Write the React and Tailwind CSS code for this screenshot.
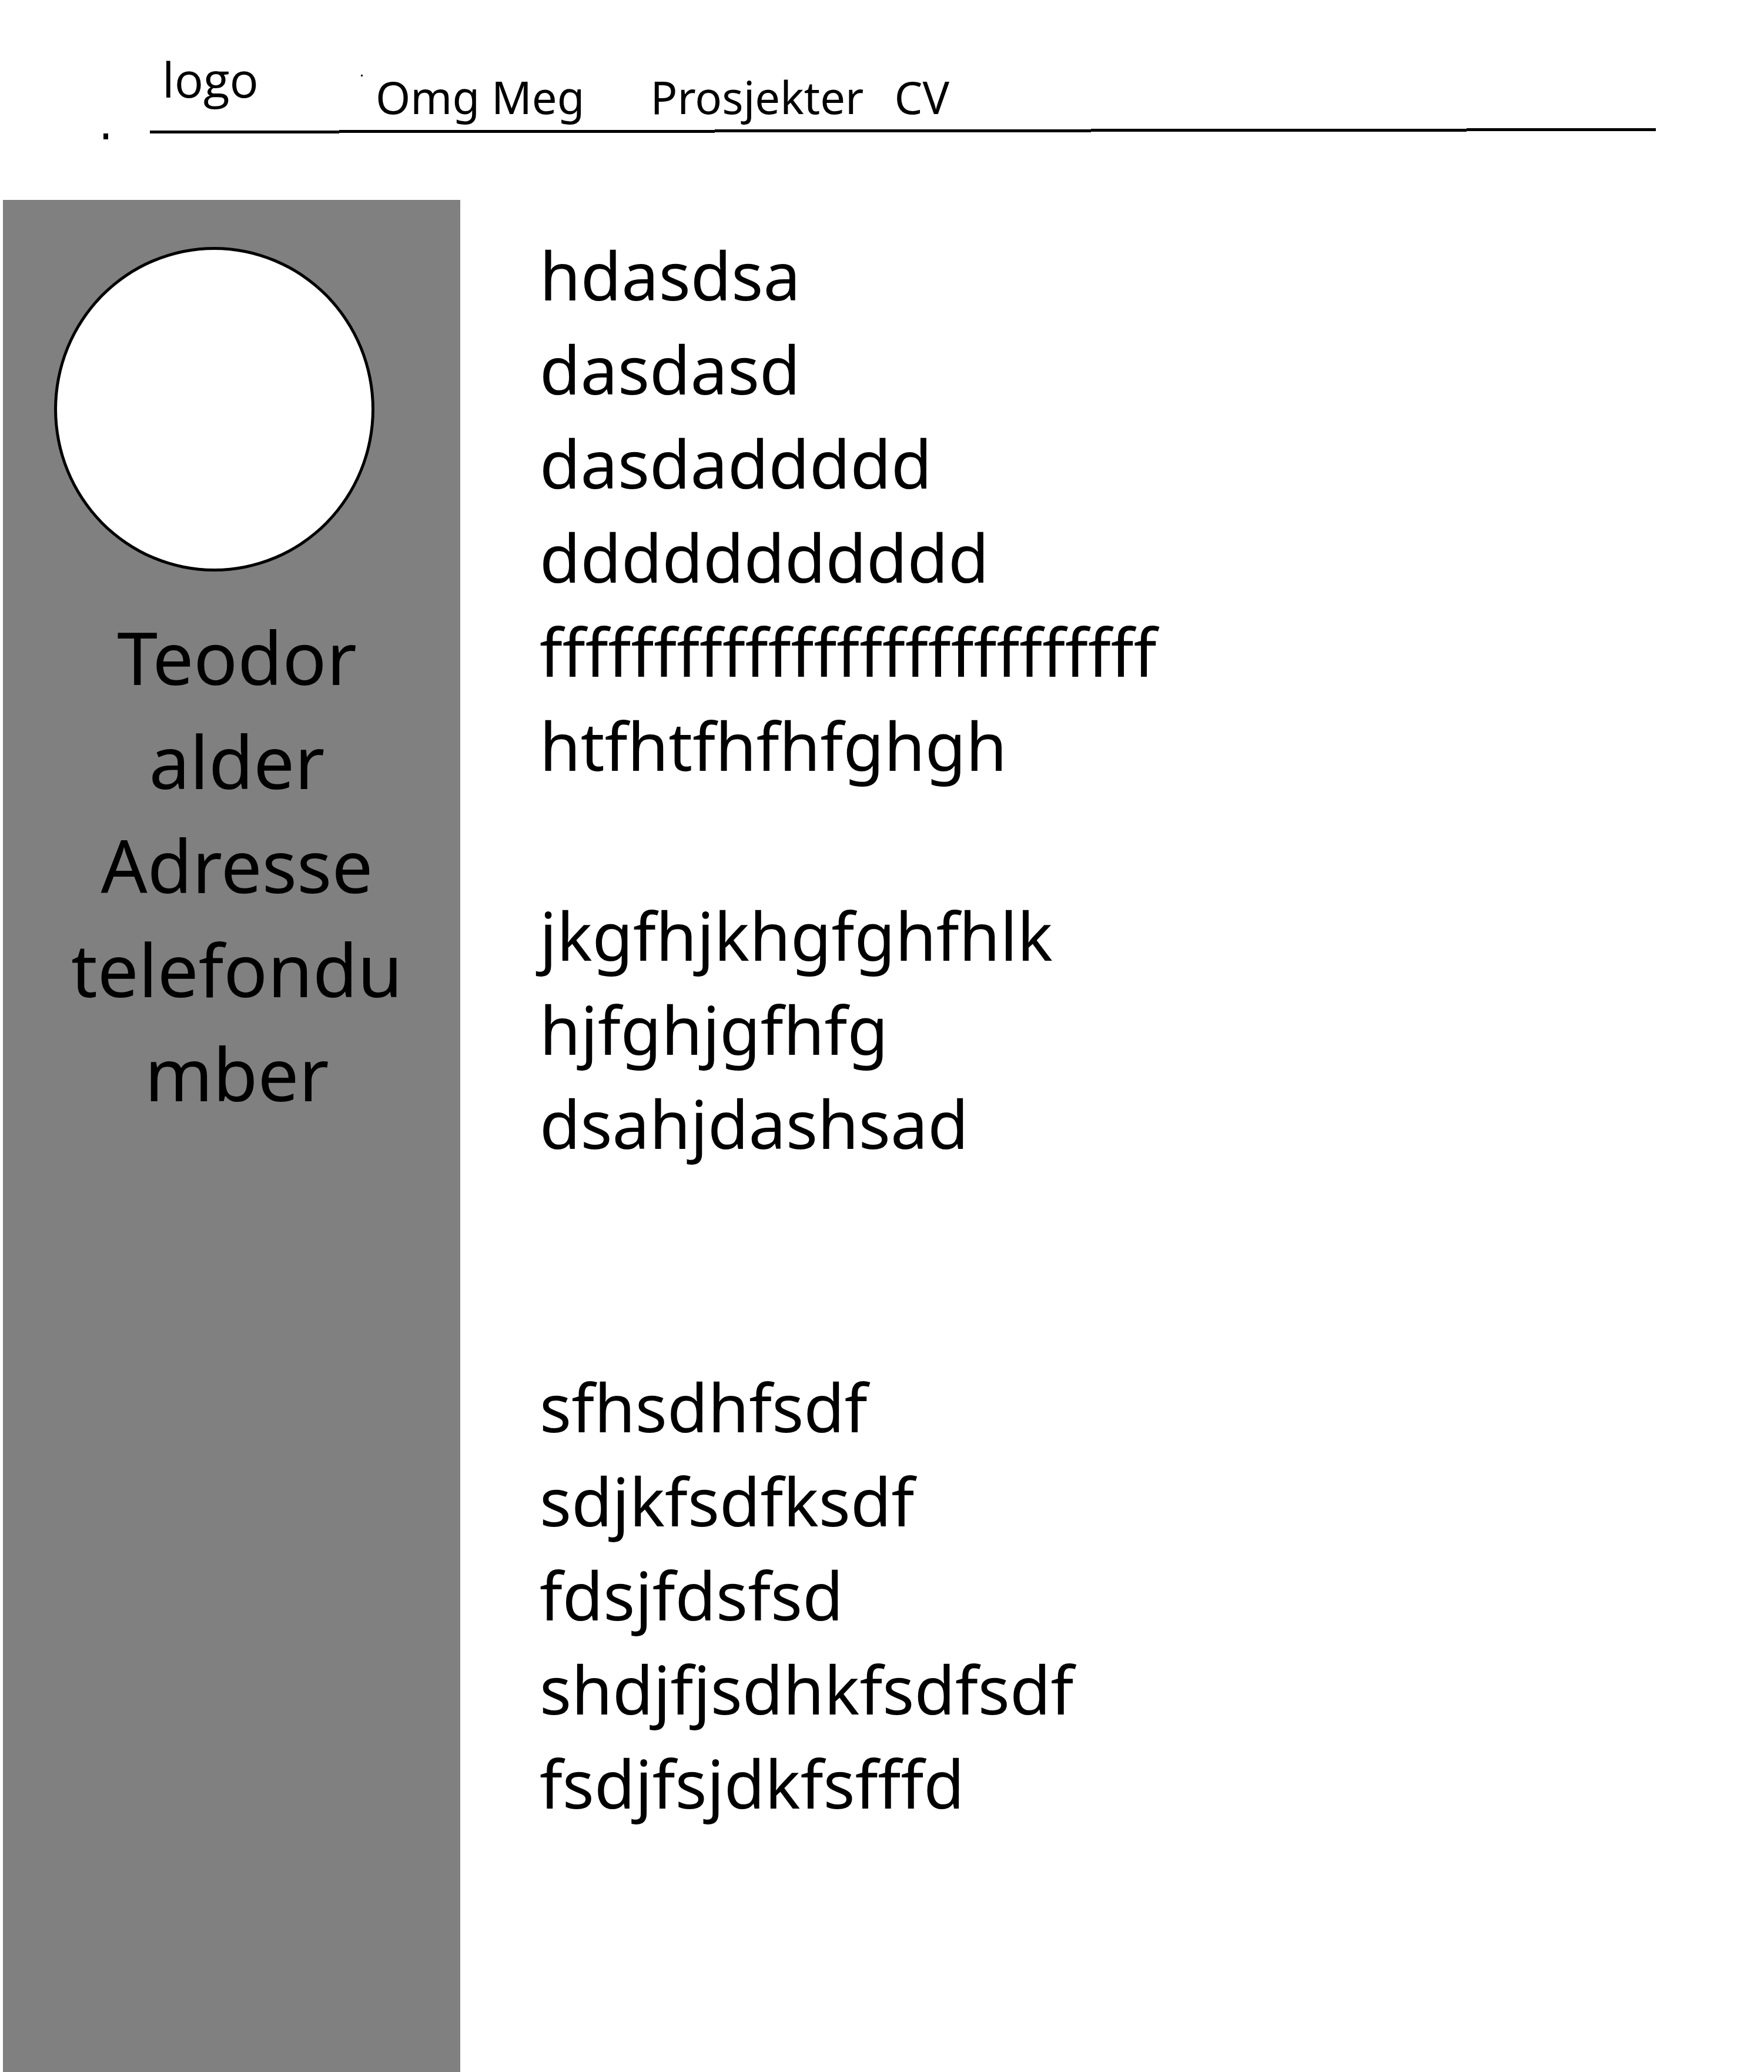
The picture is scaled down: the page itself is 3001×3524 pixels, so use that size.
const paragraphs = [
  ["hdasdsa", "dasdasd", "dasdaddddd", "ddddddddddd", "fffffffffffffffffffffffffff", "htfhtfhfhfghgh"],
  ["jkgfhjkhgfghfhlk", "hjfghjgfhfg", "dsahjdashsad"],
  ["sfhsdhfsdf", "sdjkfsdfksdf", "fdsjfdsfsd", "shdjfjsdhkfsdfsdf", "fsdjfsjdkfsfffd"],
];

const profile = ["Teodor", "alder", "Adresse", "telefondumber"];

function Rule() {
  return (
    <svg
      className="h-[9px] min-w-0 flex-1"
      viewBox="0 0 2562 9"
      preserveAspectRatio="none"
      shapeRendering="crispEdges"
      aria-hidden="true"
    >
      <path d="M0 4H322V3H961V2H1601V1H2240V0H2562V5H2240V6H1601V7H961V8H322V9H0Z" />
    </svg>
  );
}

function Header() {
  return (
    <header className="flex h-[340px] shrink-0 flex-col">
      <div className="flex h-[218px] items-start pl-[276px] pt-20">
        <a
          href="#"
          className="block w-[172px] font-['Open_Sans',sans-serif] text-[82px] leading-[108px] font-medium"
        >
          logo
        </a>
        <span className="ml-[166px] mt-[47px] size-[3px] bg-black" />
        <nav className="ml-[22px] mt-[31px] flex text-[76px] leading-[108px] whitespace-nowrap">
          <a href="#om">Omg Meg</a>
          <a href="#prosjekter" className="ml-28">Prosjekter</a>
          <a href="#cv" className="ml-[52px]">CV</a>
        </nav>
      </div>
      <div className="flex h-[19px] items-start pl-[176px] pr-[184px]">
        <span className="h-[10px] w-2 self-end bg-black" />
        <span className="w-[71px]" />
        <Rule />
      </div>
    </header>
  );
}

function Sidebar() {
  return (
    <aside className="ml-[5px] w-[778px] shrink-0 bg-[#808080] pt-20">
      <div className="ml-[87px] h-[552px] w-[545px] rounded-[50%] border-[5px] border-black bg-white" />
      <div className="ml-[98px] mt-14 w-[600px] text-center text-[124px] leading-[177px] break-all">
        {profile.map((line) => (
          <p key={line}>{line}</p>
        ))}
      </div>
    </aside>
  );
}

export default function App() {
  return (
    <div className="flex min-h-screen flex-col bg-white font-['Noto_Sans',sans-serif] text-black [font-variant-ligatures:none]">
      <Header />
      <div className="flex flex-1">
        <Sidebar />
        <main className="min-w-0 flex-1 pl-[135px] pt-[47px] text-[113px] leading-[160px]">
          {paragraphs.map((lines, i) => (
            <section key={i} className="mb-[163px] nth-2:mb-[322px] last:mb-0">
              {lines.map((line) => (
                <p key={line}>{line}</p>
              ))}
            </section>
          ))}
        </main>
      </div>
    </div>
  );
}
